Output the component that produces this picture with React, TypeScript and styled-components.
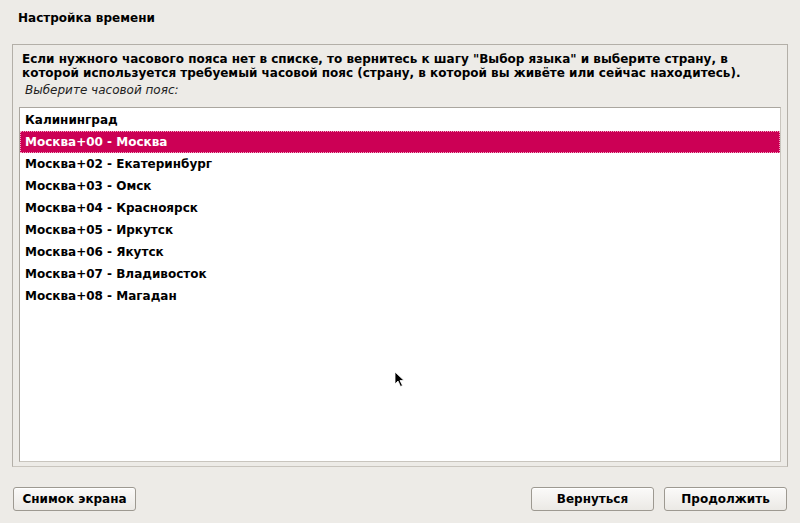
import styled, { createGlobalStyle } from "styled-components";
import { useState } from "react";

const GlobalStyle = createGlobalStyle`
  html, body {
    margin: 0;
    padding: 0;
    background: #edebe7;
  }
  body {
    font-family: "DejaVu Sans", "Liberation Sans", sans-serif;
    font-size: 12px;
    color: #000;
  }
`;

const Screen = styled.div`
  position: relative;
  width: 800px;
  height: 523px;
  display: flex;
  flex-direction: column;
  box-sizing: border-box;
  padding: 0 12px 12px 12px;
  background: #edebe7;
  overflow: hidden;
`;

const Title = styled.h1`
  margin: 0;
  height: 44px;
  box-sizing: border-box;
  padding: 10px 0 0 6px;
  font-size: 12px;
  font-weight: bold;
  line-height: 16px;
`;

const Frame = styled.section`
  flex: 1;
  display: flex;
  flex-direction: column;
  border: 1px solid #b3afa8;
  border-bottom-color: #c9c5be;
  padding: 7px 6px 4px 6px;
  min-height: 0;
`;

const Message = styled.p`
  margin: 0 0 0 3px;
  font-weight: bold;
  line-height: 14px;
`;

const Prompt = styled.p`
  margin: 3px 0 0 6px;
  font-style: oblique;
  line-height: 14px;
  color: #222;
`;

const List = styled.ul`
  flex: 1;
  list-style: none;
  margin: 10px 0 0 0;
  padding: 1px 0;
  background: #fff;
  border: 1px solid #aaa69f;
  border-right-color: #c9c5be;
  border-bottom-color: #c9c5be;
`;

const Row = styled.li<{ $selected?: boolean }>`
  height: 22px;
  box-sizing: border-box;
  padding: 0 4px;
  line-height: 20px;
  font-weight: bold;
  color: ${({ $selected }) => ($selected ? "#fff" : "#000")};
  background: ${({ $selected }) => ($selected ? "#cc0055" : "transparent")};
  border: 1px dotted ${({ $selected }) => ($selected ? "#f3a6c4" : "transparent")};
  cursor: default;
`;

const Footer = styled.footer`
  display: flex;
  align-items: flex-end;
  gap: 10px;
  height: 44px;
  padding: 0 1px;
  box-sizing: border-box;
`;

const Spacer = styled.div`
  flex: 1;
`;

const Button = styled.button`
  width: 123px;
  height: 24px;
  padding: 0;
  font-family: "DejaVu Sans", "Liberation Sans", sans-serif;
  font-size: 12px;
  font-weight: bold;
  color: #000;
  border: 1px solid #9d9991;
  border-radius: 3px;
  background: linear-gradient(#fbfaf9, #ebe9e5);
  box-shadow: inset 0 1px 0 #fff;
`;

const Pointer = styled.svg`
  position: absolute;
  left: 394px;
  top: 371px;
  width: 12px;
  height: 18px;
`;

const zones = [
  "Калининград",
  "Москва+00 - Москва",
  "Москва+02 - Екатеринбург",
  "Москва+03 - Омск",
  "Москва+04 - Красноярск",
  "Москва+05 - Иркутск",
  "Москва+06 - Якутск",
  "Москва+07 - Владивосток",
  "Москва+08 - Магадан",
];

export default function App() {
  const [selected, setSelected] = useState(1);

  return (
    <Screen>
      <GlobalStyle />
      <Title>Настройка времени</Title>
      <Frame>
        <Message>
          Если нужного часового пояса нет в списке, то вернитесь к шагу "Выбор языка" и выберите страну, в
          <br />
          которой используется требуемый часовой пояс (страну, в которой вы живёте или сейчас находитесь).
        </Message>
        <Prompt>Выберите часовой пояс:</Prompt>
        <List>
          {zones.map((zone, i) => (
            <Row key={zone} $selected={i === selected} onClick={() => setSelected(i)}>
              {zone}
            </Row>
          ))}
        </List>
      </Frame>
      <Footer>
        <Button>Снимок экрана</Button>
        <Spacer />
        <Button>Вернуться</Button>
        <Button>Продолжить</Button>
      </Footer>
      <Pointer viewBox="0 0 12 18">
        <path d="M1 1 L1 13 L4 10 L6.5 15.5 L8.5 14.5 L6 9.5 L10 9.5 Z" fill="#000" stroke="#fff" strokeWidth="0.8" />
      </Pointer>
    </Screen>
  );
}
